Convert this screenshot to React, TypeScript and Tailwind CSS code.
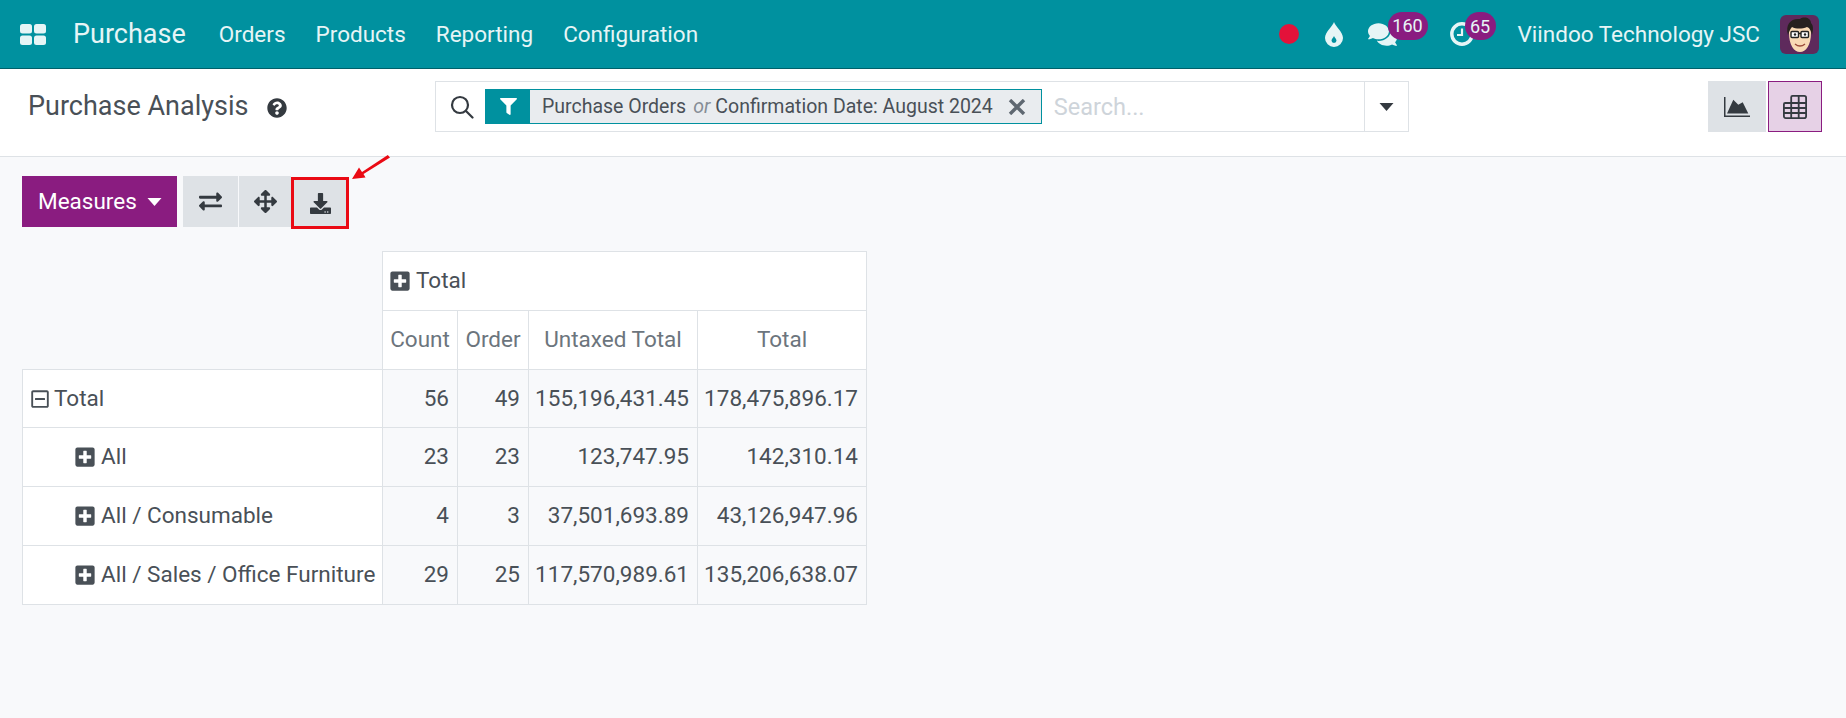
import { FaArrowsAlt, FaComments, FaDownload, FaExchangeAlt, FaFilter, FaPlusSquare, FaQuestionCircle, FaRegMinusSquare } from "react-icons/fa"

const navItems = ["Orders", "Products", "Reporting", "Configuration"]

const rows = [
  { label: "All", count: "23", order: "23", untaxed: "123,747.95", total: "142,310.14" },
  { label: "All / Consumable", count: "4", order: "3", untaxed: "37,501,693.89", total: "43,126,947.96" },
  { label: "All / Sales / Office Furniture", count: "29", order: "25", untaxed: "117,570,989.61", total: "135,206,638.07" },
]

function AppsIcon() {
  return (
    <svg width="26" height="21" viewBox="0 0 26 21" fill="#e6f5f6">
      <rect x="0" y="0" width="12" height="9.500" rx="2.500" />
      <rect x="14" y="0" width="12" height="9.500" rx="2.500" />
      <rect x="0" y="11.500" width="12" height="9.500" rx="2.500" />
      <rect x="14" y="11.500" width="12" height="9.500" rx="2.500" />
    </svg>
  )
}

function DropIcon() {
  return (
    <svg width="18" height="25" viewBox="0 0 18 25" fill="#e6f5f6">
      <path
        fillRule="evenodd"
        d="M9 0c1 4 9 10 9 16a9 9 0 0 1-18 0C0 10 8 4 9 0zM9 14c-.6 1.600-2.500 3-2.500 4.500a2.500 2.500 0 0 0 5 0C11.500 17 9.600 15.600 9 14z"
      />
    </svg>
  )
}

function ClockIcon() {
  return (
    <svg width="24" height="24" viewBox="0 0 24 24" fill="none" stroke="#e6f5f6">
      <circle cx="12" cy="12" r="10.200" strokeWidth="3.400" />
      <path d="M12 6.500v6.500H7" strokeWidth="2.200" />
    </svg>
  )
}

function SearchIcon() {
  return (
    <svg width="24" height="24" viewBox="0 0 24 24" fill="none" stroke="#343a40" strokeWidth="2.200" strokeLinecap="round">
      <circle cx="10" cy="10" r="8" />
      <path d="M16 16l6.500 6.500" />
    </svg>
  )
}

function CloseIcon() {
  return (
    <svg width="18" height="16" viewBox="0 0 18 16" fill="none" stroke="#5f6871" strokeWidth="3.400">
      <path d="M2 1l14 14M16 1L2 15" />
    </svg>
  )
}

function Caret({ color }: { color: string }) {
  return (
    <svg width="15" height="8" viewBox="0 0 15 8" fill={color}>
      <path d="M.5 0h14L7.500 8z" />
    </svg>
  )
}

function AreaIcon() {
  return (
    <svg width="26" height="20" viewBox="0 0 26 20" fill="#343a40">
      <path d="M.75 0v19.200H26" fill="none" stroke="#343a40" strokeWidth="1.500" />
      <path d="M3 16.500L9.300 2.700l5 5 4.400-2.400 5.600 11.200z" />
    </svg>
  )
}

function PivotIcon() {
  return (
    <svg width="24" height="24" viewBox="0 0 24 24" fill="none" stroke="#343a40" strokeWidth="1.800">
      <path d="M8.200 8V2.200A1.300 1.300 0 0 1 9.500.9h11.700a1.900 1.900 0 0 1 1.900 1.900v18.400a1.900 1.900 0 0 1-1.900 1.900H2.800a1.900 1.900 0 0 1-1.900-1.900V9.300A1.300 1.300 0 0 1 2.200 8H23M.9 13h22.200M.9 18h22.200M8.200 8v15M15.700.9v22.200" />
    </svg>
  )
}

function Avatar() {
  return (
    <svg width="39" height="39" viewBox="0 0 39 39" className="rounded-md">
      <rect width="39" height="39" fill="#5e2a5c" />
      <path d="M9 18c0 12 5 19 11 19s11-7 11-19-5-10-11-10-11-2-11 10z" fill="#f8d9b4" />
      <path d="M8 20C5 9 11 3 20 4c4-3 11-1 11 4 3 3 2 8 1 12-1-4-2-7-5-8-5 2-11 2-15 0-2 2-3 5-4 8z" fill="#27211f" />
      <rect x="11" y="16.500" width="7.500" height="6" rx="1" fill="#fff" stroke="#222" strokeWidth="1.400" />
      <rect x="21" y="16.500" width="7.500" height="6" rx="1" fill="#fff" stroke="#222" strokeWidth="1.400" />
      <path d="M18.500 18.500h2.500" stroke="#222" strokeWidth="1.400" />
      <circle cx="15" cy="19.500" r="1.200" fill="#222" />
      <circle cx="25" cy="19.500" r="1.200" fill="#222" />
      <path d="M15 29c3 2.500 7 2.500 10 0" stroke="#9a4a3a" strokeWidth="1.400" fill="none" />
    </svg>
  )
}

export default function App() {
  return (
    <div className="h-[718px] w-[1846px] overflow-hidden bg-[#f8f9fb] font-['Roboto',sans-serif] text-[#495057]">
      {/* Navbar */}
      <div className="flex h-[69px] items-center border-b border-[#00606a] bg-[#00919f] pr-[27px] pl-5 text-[#e6f5f6]">
        <AppsIcon />
        <span className="mr-[33px] ml-[27px] text-[27px]">Purchase</span>
        <div className="mt-[1px] flex gap-[30px] text-[22.500px]">
          {navItems.map((item) => (
            <span key={item}>{item}</span>
          ))}
        </div>
        <div className="ml-auto flex items-center">
          <span className="h-5 w-5 rounded-full bg-[#e3123a]" />
          <span className="ml-[26px] flex">
            <DropIcon />
          </span>
          <div className="relative ml-[25px]">
            <FaComments className="text-[29px]" />
            <span className="absolute top-[-8px] left-[20px] flex h-[28px] w-[40px] items-center justify-center rounded-full bg-[#8a1c80] text-[18px]">
              160
            </span>
          </div>
          <div className="relative ml-[53px]">
            <ClockIcon />
            <span className="absolute top-[-10px] left-[15px] flex h-[28px] w-[31px] items-center justify-center rounded-full bg-[#8a1c80] text-[18px]">
              65
            </span>
          </div>
          <span className="mt-[1px] ml-[44px] text-[22.500px]">Viindoo Technology JSC</span>
          <div className="ml-[20px] flex">
            <Avatar />
          </div>
        </div>
      </div>

      {/* Control panel */}
      <div className="flex h-[88px] items-start border-b border-[#dee2e6] bg-white pt-[12px]">
        <div className="flex h-[51px] w-[435px] items-center pl-[28px]">
          <span className="text-[27px]">Purchase Analysis</span>
          <FaQuestionCircle className="mt-[3px] ml-[19px] text-[20px] text-[#343a40]" />
        </div>
        <div className="flex h-[51px] w-[974px] border border-[#dee2e6]">
          <div className="flex min-w-0 flex-1 items-center">
            <span className="mr-[11px] ml-[14px]">
              <SearchIcon />
            </span>
            <div className="flex h-[35px] items-stretch border border-[#00919f] bg-[#e9ecef]">
              <span className="flex w-[44px] items-center justify-center bg-[#00919f] text-[17px] text-white">
                <FaFilter />
              </span>
              <span className="flex items-center pl-[12px] text-[19.500px] whitespace-nowrap">
                Purchase Orders
                <i className="mr-[5px] ml-[7px] text-[#868e96]">or</i>
                Confirmation Date: August 2024
                <span className="mr-[15px] ml-[15px] flex">
                  <CloseIcon />
                </span>
              </span>
            </div>
            <span className="mt-[2px] ml-[12px] text-[23.500px] text-[#ced4da]">Search...</span>
          </div>
          <div className="flex w-[44px] items-center justify-center border-l border-[#dee2e6]">
            <Caret color="#343a40" />
          </div>
        </div>
        <div className="ml-[299px] flex gap-[2px]">
          <button className="flex h-[51px] w-[58px] items-center justify-center bg-[#dee2e6]">
            <AreaIcon />
          </button>
          <button className="flex h-[51px] w-[54px] items-center justify-center border border-[#8a1c80] bg-[#e6d1e6]">
            <PivotIcon />
          </button>
        </div>
      </div>

      {/* Toolbar */}
      <div className="flex items-start pt-[19px] pl-[22px]">
        <button className="flex h-[51px] w-[155px] items-center gap-[10px] bg-[#8a1c80] pl-[16px] text-[22.500px] text-white">
          Measures
          <Caret color="#ffffff" />
        </button>
        <div className="ml-[6px] flex items-start text-[23px] text-[#343a40]">
          <button className="flex h-[51px] w-[55px] items-center justify-center bg-[#dee2e6]">
            <FaExchangeAlt />
          </button>
          <button className="ml-px flex h-[51px] w-[52px] items-center justify-center bg-[#dee2e6] pl-px">
            <FaArrowsAlt />
          </button>
          <button className="relative mt-px flex h-[52px] w-[58px] items-center justify-center border-[3px] border-[#ea0a14] bg-[#dee2e6] text-[21px]">
            <FaDownload />
            <svg className="absolute top-[-25px] left-[58px]" width="40" height="28" viewBox="0 0 40 28" fill="#ea0a14">
              <path d="M38 2.500L35.800 0 10 17l-3-4.500L0 24l13.500-1.500-2-3.500z" />
            </svg>
          </button>
        </div>
      </div>

      {/* Pivot table */}
      <table className="mt-[22px] ml-[22px] w-[844px] table-fixed border-collapse text-[22.500px]">
        <colgroup>
          <col className="w-[360px]" />
          <col className="w-[75px]" />
          <col className="w-[71px]" />
          <col className="w-[169px]" />
          <col className="w-[169px]" />
        </colgroup>
        <thead>
          <tr className="h-[59px]">
            <th className="border-r border-[#dee2e6]"></th>
            <th colSpan={4} className="border border-[#dee2e6] bg-white px-[6px] text-left font-normal">
              <span className="flex items-center gap-[5px]">
                <FaPlusSquare className="text-[22px] text-[#495057]" />
                Total
              </span>
            </th>
          </tr>
          <tr className="h-[59px] text-[#6c757d]">
            <th className="border-r border-b border-[#dee2e6]"></th>
            <th className="border border-[#dee2e6] bg-white font-normal">Count</th>
            <th className="border border-[#dee2e6] bg-white font-normal">Order</th>
            <th className="border border-[#dee2e6] bg-white font-normal">Untaxed Total</th>
            <th className="border border-[#dee2e6] bg-white font-normal">Total</th>
          </tr>
        </thead>
        <tbody>
          <tr className="h-[58px]">
            <td className="border border-[#dee2e6] bg-white px-[7px]">
              <span className="flex items-center gap-[4px]">
                <FaRegMinusSquare className="text-[20px]" />
                Total
              </span>
            </td>
            <td className="border border-[#dee2e6] pr-[8px] text-right">56</td>
            <td className="border border-[#dee2e6] pr-[8px] text-right">49</td>
            <td className="border border-[#dee2e6] pr-[8px] text-right">155,196,431.45</td>
            <td className="border border-[#dee2e6] pr-[8px] text-right">178,475,896.17</td>
          </tr>
          {rows.map((row) => (
            <tr key={row.label} className="h-[59px]">
              <td className="border border-[#dee2e6] bg-white pl-[51px] whitespace-nowrap">
                <span className="flex items-center gap-[5px]">
                  <FaPlusSquare className="text-[22px]" />
                  {row.label}
                </span>
              </td>
              <td className="border border-[#dee2e6] pr-[8px] text-right">{row.count}</td>
              <td className="border border-[#dee2e6] pr-[8px] text-right">{row.order}</td>
              <td className="border border-[#dee2e6] pr-[8px] text-right">{row.untaxed}</td>
              <td className="border border-[#dee2e6] pr-[8px] text-right">{row.total}</td>
            </tr>
          ))}
        </tbody>
      </table>
    </div>
  )
}
